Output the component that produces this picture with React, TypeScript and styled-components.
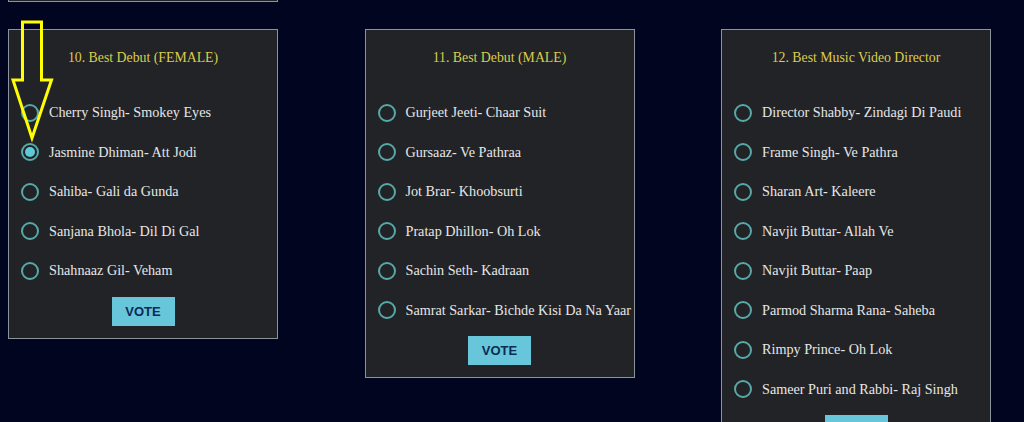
import React, { useState } from 'react';
import styled, { createGlobalStyle } from 'styled-components';

const GlobalStyle = createGlobalStyle`
  html, body {
    margin: 0;
    padding: 0;
    background: #02051f;
    overflow: hidden;
  }
`;

type Category = {
  title: string;
  nominees: string[];
  selected?: number;
};

const categories: Category[] = [
  {
    title: '10. Best Debut (FEMALE)',
    nominees: [
      'Cherry Singh- Smokey Eyes',
      'Jasmine Dhiman- Att Jodi',
      'Sahiba- Gali da Gunda',
      'Sanjana Bhola- Dil Di Gal',
      'Shahnaaz Gil- Veham',
    ],
    selected: 1,
  },
  {
    title: '11. Best Debut (MALE)',
    nominees: [
      'Gurjeet Jeeti- Chaar Suit',
      'Gursaaz- Ve Pathraa',
      'Jot Brar- Khoobsurti',
      'Pratap Dhillon- Oh Lok',
      'Sachin Seth- Kadraan',
      'Samrat Sarkar- Bichde Kisi Da Na Yaar',
    ],
  },
  {
    title: '12. Best Music Video Director',
    nominees: [
      'Director Shabby- Zindagi Di Paudi',
      'Frame Singh- Ve Pathra',
      'Sharan Art- Kaleere',
      'Navjit Buttar- Allah Ve',
      'Navjit Buttar- Paap',
      'Parmod Sharma Rana- Saheba',
      'Rimpy Prince- Oh Lok',
      'Sameer Puri and Rabbi- Raj Singh',
    ],
  },
];

const Page = styled.div`
  position: relative;
  padding: 0 8px;
  font-family: 'Liberation Serif', 'DejaVu Serif', serif;
`;

const PrevRow = styled.div`
  display: flex;
  gap: 86.5px;
  margin-bottom: 27px;
`;

const PrevStub = styled.div`
  width: 270px;
  height: 2px;
  box-sizing: border-box;
  border: 1px solid #8d939b;
  border-top: none;
  background: #212326;
`;

const Row = styled.div`
  display: flex;
  align-items: flex-start;
  gap: 86.5px;
`;

const Card = styled.form`
  width: 270px;
  box-sizing: border-box;
  border: 1px solid #8d939b;
  background: #212326;
  padding: 18px 12px 12px;
  display: flex;
  flex-direction: column;
`;

const Title = styled.div`
  text-align: center;
  color: #dccd4c;
  font-size: 13.8px;
  line-height: 20px;
  margin-bottom: 25px;
`;

const List = styled.div`
  display: flex;
  flex-direction: column;
`;

const Option = styled.label`
  display: flex;
  align-items: center;
  gap: 10px;
  height: 39.5px;
  color: #e6e6e6;
  font-size: 14.2px;
  white-space: nowrap;
  cursor: pointer;
`;

const Radio = styled.span<{ $checked: boolean }>`
  flex: none;
  width: 18px;
  height: 18px;
  box-sizing: border-box;
  border-radius: 50%;
  border: 2px solid #58a8a8;
  padding: 2px;
  background-clip: content-box;
  background-color: ${(p) => (p.$checked ? '#5ccad8' : 'transparent')};
`;

const VoteButton = styled.button`
  align-self: center;
  margin-top: 6px;
  width: 63px;
  height: 29px;
  border: none;
  background: #67c6da;
  color: #0d2a52;
  font-family: 'Liberation Sans', Arial, sans-serif;
  font-weight: bold;
  font-size: 13px;
  padding: 0;
`;

const Arrow = styled.svg`
  position: absolute;
  left: 0;
  top: 0;
  pointer-events: none;
`;

const Ballot: React.FC<{ cat: Category }> = ({ cat }) => {
  const [value, setValue] = useState<number | undefined>(cat.selected);
  return (
    <Card onSubmit={(e) => e.preventDefault()}>
      <Title>{cat.title}</Title>
      <List>
        {cat.nominees.map((n, i) => (
          <Option key={n} onClick={() => setValue(i)}>
            <Radio $checked={value === i} />
            {n}
          </Option>
        ))}
      </List>
      <VoteButton type="submit">VOTE</VoteButton>
    </Card>
  );
};

export default function App() {
  return (
    <>
      <GlobalStyle />
      <Page>
        <PrevRow>
          <PrevStub />
        </PrevRow>
        <Row>
          {categories.map((c) => (
            <Ballot key={c.title} cat={c} />
          ))}
        </Row>
        <Arrow width="70" height="150" viewBox="0 0 70 150">
          <polygon
            points="22.5,22 41.5,22 41.5,80 51.5,80 32,138 13,80 22.5,80"
            fill="none"
            stroke="#ffff00"
            strokeWidth="3"
            strokeLinejoin="miter"
          />
        </Arrow>
      </Page>
    </>
  );
}
